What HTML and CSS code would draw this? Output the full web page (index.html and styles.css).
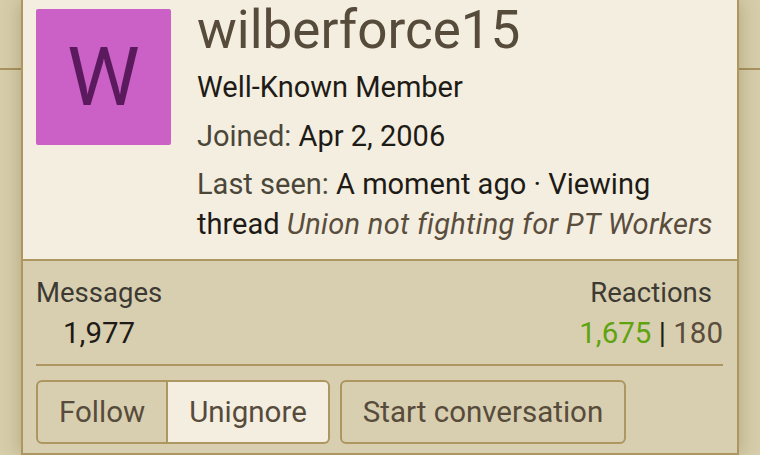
FILE: index.html
```html
<!DOCTYPE html>
<html lang="en">
<head>
  <meta charset="UTF-8" />
  <meta name="viewport" content="width=device-width, initial-scale=1" />
  <title>wilberforce15</title>
  <link rel="stylesheet" href="styles.css">
</head>

<body>
  <div class="card">
    <div class="card-top">
      <div class="avatar">W</div>
      <div class="info">
        <h2 class="username">wilberforce15</h2>
        <div class="line title">Well-Known Member</div>
        <div class="line"><span class="muted">Joined:</span> Apr 2, 2006</div>
        <div class="line"><span class="muted">Last seen:</span> <span>A moment ago · Viewing</span> <span>thread</span> <em>Union not fighting for PT Workers</em></div>
      </div>
    </div>

    <div class="card-bottom">
      <div class="stats">
        <dl class="stat">
          <dt>Messages</dt>
          <dd>1,977</dd>
        </dl>
        <dl class="stat">
          <dt>Reactions</dt>
          <dd><span class="positive">1,675</span> <span class="sep">|</span> <span class="negative">180</span></dd>
        </dl>
      </div>

      <div class="actions">
        <div class="button-group">
          <button class="btn">Follow</button>
          <button class="btn active">Unignore</button>
        </div>
        <button class="btn">Start conversation</button>
      </div>
    </div>
  </div>
</body>
</html>
```

FILE: styles.css
```css
* {
  box-sizing: border-box;
}

body {
  margin: 0;
  padding: 0;
  font-family: Roboto, 'Noto Sans', sans-serif;
  background-color: #d6cdaa;
  background-image: linear-gradient(to bottom, transparent 68px, #a8925f 68px, #a8925f 70px, transparent 70px);
  height: 455px;
  overflow: hidden;
}

.card {
  margin-left: 21px;
  width: 718px;
  border: 2px solid #ad9660;
  border-top: none;
  box-shadow: 0 0 18px rgba(90, 70, 20, 0.3);
  min-height: 455px;
  background: #d8cfb0;
}

.card-top {
  display: flex;
  gap: 26px;
  background: #f3eee0;
  padding: 9px 14px 15px 13px;
  border-bottom: 2px solid #ad9660;
}

.avatar {
  flex: none;
  width: 135px;
  height: 136px;
  border-radius: 2px;
  background: #cb61c7;
  color: #5c1a5e;
  font-size: 82px;
  line-height: 136px;
  text-align: center;
}

.info {
  font-size: 29px;
  line-height: 40px;
  color: #1e1b16;
}

.username {
  margin: 0 0 16px;
  font-size: 53px;
  line-height: 42px;
  font-weight: normal;
  color: #574b3b;
}

.line + .line {
  margin-top: 8.5px;
}

.muted {
  color: #4b4738;
}

.info em {
  color: #5a4d3c;
  letter-spacing: 0.3px;
}

.card-bottom {
  padding: 12px 14px 0 13px;
}

.stats {
  display: flex;
  justify-content: space-between;
  padding-bottom: 11px;
  border-bottom: 2px solid #ad9660;
  line-height: 40px;
}

.stat {
  margin: 0;
  text-align: center;
}

.stat dt {
  font-size: 27.5px;
  color: #3d3a33;
}

.stat dd {
  margin: 0;
  font-size: 29.5px;
  color: #1e1b16;
}

.positive {
  color: #5fa30f;
}

.sep {
  color: #1e1b16;
}

.negative {
  color: #5a4d3c;
}

.actions {
  display: flex;
  gap: 10px;
  margin-top: 14px;
}

.button-group {
  display: flex;
}

.btn {
  font-family: inherit;
  font-size: 29.5px;
  line-height: 40px;
  padding: 10px 21px;
  color: #574b3b;
  background: #d8cfb0;
  border: 2px solid #ad9660;
  border-radius: 6px;
}

.button-group .btn:first-child {
  border-radius: 6px 0 0 6px;
}

.button-group .btn:last-child {
  border-left: none;
  border-radius: 0 6px 6px 0;
}

.btn.active {
  background: #f3eee0;
}
```
